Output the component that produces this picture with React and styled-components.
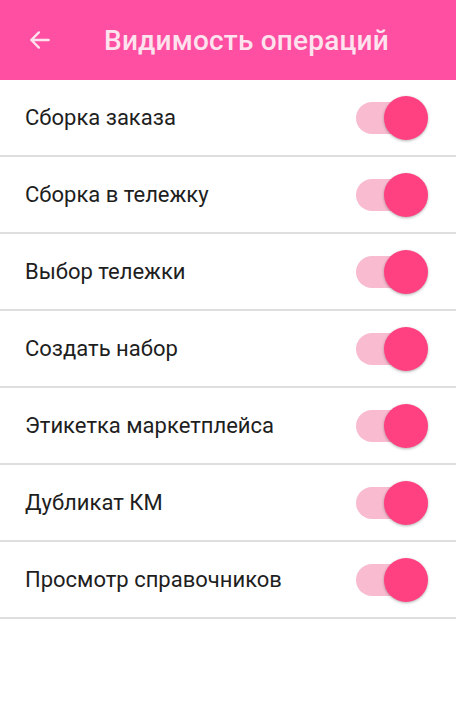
import React from 'react';
import styled, { createGlobalStyle } from 'styled-components';

const GlobalStyle = createGlobalStyle`
  body {
    margin: 0;
    background: #fff;
    font-family: Roboto, "Noto Sans", sans-serif;
  }
`;

const Page = styled.div`
  width: 456px;
  min-height: 704px;
  background: #fff;
`;

const AppBar = styled.header`
  height: 80px;
  background-color: #ff4fa3;
  display: flex;
  align-items: center;
  padding: 0 0 0 26px;
  box-sizing: border-box;
`;

const BackButton = styled.button`
  background: transparent;
  border: none;
  padding: 0;
  width: 28px;
  height: 28px;
  display: flex;
  align-items: center;
  justify-content: center;
  color: #fde3ee;
  cursor: pointer;
`;

const Title = styled.h1`
  margin: 0 0 0 50px;
  font-size: 28px;
  font-weight: 500;
  color: #fde3ee;
  letter-spacing: 0.2px;
`;

const List = styled.ul`
  list-style: none;
  margin: 0;
  padding: 0;
`;

const Row = styled.li`
  height: 75px;
  display: flex;
  align-items: center;
  justify-content: space-between;
  padding: 0 26px 0 25px;
  border-bottom: 2px solid #dedede;
`;

const Label = styled.span`
  font-size: 22px;
  color: #1e1e1e;
`;

const Switch = styled.div`
  position: relative;
  width: 74px;
  height: 46px;
  display: flex;
  align-items: center;
`;

const Track = styled.div`
  width: 62px;
  height: 32px;
  border-radius: 16px;
  background: ${(p) => (p.$on ? '#f8bbd0' : '#bdbdbd')};
`;

const Thumb = styled.div`
  position: absolute;
  top: 1px;
  left: ${(p) => (p.$on ? '28px' : '0')};
  width: 44px;
  height: 44px;
  border-radius: 50%;
  background: ${(p) => (p.$on ? '#ff4081' : '#fafafa')};
  box-shadow: 0 1px 3px rgba(0, 0, 0, 0.3);
`;

const items = [
  'Сборка заказа',
  'Сборка в тележку',
  'Выбор тележки',
  'Создать набор',
  'Этикетка маркетплейса',
  'Дубликат КМ',
  'Просмотр справочников',
];

const App = () => {
  return (
    <Page>
      <GlobalStyle />
      <AppBar>
        <BackButton aria-label="back">
          <svg width="26" height="26" viewBox="0 0 24 24" fill="none">
            <path
              d="M20 12H4M11 5l-7 7 7 7"
              stroke="currentColor"
              strokeWidth="2.2"
              strokeLinecap="round"
              strokeLinejoin="round"
            />
          </svg>
        </BackButton>
        <Title>Видимость операций</Title>
      </AppBar>
      <List>
        {items.map((item) => (
          <Row key={item}>
            <Label>{item}</Label>
            <Switch>
              <Track $on />
              <Thumb $on />
            </Switch>
          </Row>
        ))}
      </List>
    </Page>
  );
};

export default App;
